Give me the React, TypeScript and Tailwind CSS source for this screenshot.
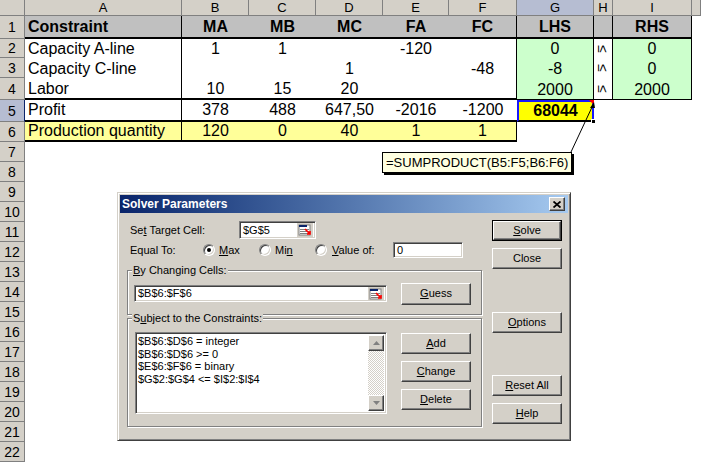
import React from "react";

const hdr = "flex items-center justify-center bg-[#d4d0c8] border-r border-b border-[#808080] text-[13px] leading-none";
const hdrSel = "flex items-center justify-center bg-[#b6bdd2] border-r border-b border-[#808080] text-[13px] leading-none";
const rowHdr = "flex items-center justify-center bg-[#d4d0c8] border-r border-b border-[#808080] text-[14px] leading-none";
const rowHdrSel = "flex items-center justify-center bg-[#b6bdd2] border-r border-b border-r-[#0a246a] border-[#808080] text-[14px] leading-none";

const r1A = "flex items-end pl-[3px] pb-[1px] bg-[#c0c0c0] border-r border-b-2 border-black font-bold text-[16px] leading-[18px]";
const r1 = "flex items-end justify-center pb-[1px] bg-[#c0c0c0] border-b-2 border-black font-bold text-[16px] leading-[18px]";
const r1R = "flex items-end justify-center pb-[1px] bg-[#c0c0c0] border-r border-b-2 border-black font-bold text-[16px] leading-[18px]";

const cA = "flex items-end pl-[3px] border-r border-black text-[16px] leading-[18px]";
const c = "flex items-end justify-center text-[16px] leading-[18px]";
const cR = "flex items-end justify-center border-r border-black text-[16px] leading-[18px]";
const cG = "flex items-end justify-center bg-[#ccffcc] border-r border-black text-[16px] leading-[18px]";
const cH = "flex items-center justify-center border-r border-black text-[14px] leading-none";

const c4A = "flex items-end pl-[3px] border-r border-b-2 border-black text-[16px] leading-[18px]";
const c4 = "flex items-end justify-center border-b-2 border-black text-[16px] leading-[18px]";
const c4R = "flex items-end justify-center border-r border-b-2 border-black text-[16px] leading-[18px]";
const c4G = "flex items-end justify-center bg-[#ccffcc] border-r border-b border-black text-[16px] leading-[18px]";
const c4H = "flex items-center justify-center border-r border-b border-black text-[14px] leading-none";

const c5A = "flex items-end pl-[3px] pb-[1px] border-r border-b-2 border-black text-[16px] leading-[18px]";
const c5 = "flex items-end justify-center pb-[1px] border-b-2 border-black text-[16px] leading-[18px]";

const c6A = "flex items-end pl-[3px] bg-[#ffff99] border-r border-b-2 border-black text-[16px] leading-[18px]";
const c6 = "flex items-end justify-center bg-[#ffff99] border-b-2 border-black text-[16px] leading-[18px]";
const c6R = "flex items-end justify-center bg-[#ffff99] border-r border-b-2 border-black text-[16px] leading-[18px]";

function Le() {
  return <span className="inline-block rotate-90">≤</span>;
}

function Sheet() {
  const rest = [7, 8, 9, 10, 11, 12, 13, 14, 15, 16, 17, 18, 19, 20, 21, 22];
  return (
    <div className="grid grid-cols-[25px_157px_67px_67px_67px_66px_68px_77px_19px_79px_1fr] grid-rows-[16px_23px_19px_20px_22px_22px_20px_repeat(16,20px)] w-[701px] h-[462px] bg-white text-black">
      <div className={hdr}></div>
      <div className={hdr}>A</div>
      <div className={hdr}>B</div>
      <div className={hdr}>C</div>
      <div className={hdr}>D</div>
      <div className={hdr}>E</div>
      <div className={hdr}>F</div>
      <div className={hdrSel}>G</div>
      <div className={hdr}>H</div>
      <div className={hdr}>I</div>
      <div className={hdr}></div>

      <div className={rowHdr}>1</div>
      <div className={r1A}>Constraint</div>
      <div className={r1}>MA</div>
      <div className={r1}>MB</div>
      <div className={r1}>MC</div>
      <div className={r1}>FA</div>
      <div className={r1R}>FC</div>
      <div className={r1R}>LHS</div>
      <div className={r1R}></div>
      <div className={r1R}>RHS</div>
      <div></div>

      <div className={rowHdr}>2</div>
      <div className={cA}>Capacity A-line</div>
      <div className={c}>1</div>
      <div className={c}>1</div>
      <div className={c}></div>
      <div className={c}>-120</div>
      <div className={cR}></div>
      <div className={cG}>0</div>
      <div className={cH}><Le /></div>
      <div className={cG}>0</div>
      <div></div>

      <div className={rowHdr}>3</div>
      <div className={cA}>Capacity C-line</div>
      <div className={c}></div>
      <div className={c}></div>
      <div className={c}>1</div>
      <div className={c}></div>
      <div className={cR}>-48</div>
      <div className={cG}>-8</div>
      <div className={cH}><Le /></div>
      <div className={cG}>0</div>
      <div></div>

      <div className={rowHdr}>4</div>
      <div className={c4A}>Labor</div>
      <div className={c4}>10</div>
      <div className={c4}>15</div>
      <div className={c4}>20</div>
      <div className={c4}></div>
      <div className={c4R}></div>
      <div className={c4G}>2000</div>
      <div className={c4H}><Le /></div>
      <div className={c4G}>2000</div>
      <div></div>

      <div className={rowHdrSel}>5</div>
      <div className={c5A}>Profit</div>
      <div className={c5}>378</div>
      <div className={c5}>488</div>
      <div className={c5}>647,50</div>
      <div className={c5}>-2016</div>
      <div className={c5}>-1200</div>
      <div className="relative flex items-center justify-center bg-[#ffff00] border-2 border-[#1818ff] border-b-black font-bold text-[16px] leading-[18px]">
        68044
        <div className="absolute right-[-2px] top-[-2px] w-0 h-0 border-l-[5px] border-l-transparent border-t-[5px] border-t-[#ff0000]"></div>
        <div className="absolute right-[-4px] bottom-[-4px] w-[5px] h-[5px] bg-black border border-white"></div>
      </div>
      <div></div>
      <div></div>
      <div></div>

      <div className={rowHdr}>6</div>
      <div className={c6A}>Production quantity</div>
      <div className={c6}>120</div>
      <div className={c6}>0</div>
      <div className={c6}>40</div>
      <div className={c6}>1</div>
      <div className={c6R}>1</div>
      <div></div>
      <div></div>
      <div></div>
      <div></div>

      {rest.map((n) => (
        <React.Fragment key={n}>
          <div className={rowHdr}>{n}</div>
          <div className="col-span-10"></div>
        </React.Fragment>
      ))}
    </div>
  );
}

const btn = "flex items-center justify-center bg-[#d4d0c8] border border-t-white border-l-white border-r-[#404040] border-b-[#404040] shadow-[inset_-1px_-1px_0_#808080] text-[11px] leading-[13px]";
const field = "flex items-center bg-white border border-t-[#808080] border-l-[#808080] border-r-white border-b-white shadow-[inset_1px_1px_0_#404040,inset_-1px_-1px_0_#d4d0c8]";

function RangeIcon() {
  return (
    <svg width="16" height="14" viewBox="0 0 16 14" className="shrink-0">
      <rect x="0" y="0" width="16" height="14" fill="#d4d0c8" />
      <rect x="2" y="2" width="11" height="10" fill="#ffffff" stroke="#808080" strokeWidth="1" />
      <rect x="2" y="2" width="8" height="2" fill="#0a246a" />
      <line x1="3" y1="6.5" x2="12" y2="6.5" stroke="#808080" />
      <line x1="3" y1="8.5" x2="12" y2="8.5" stroke="#808080" />
      <line x1="3" y1="10.5" x2="12" y2="10.5" stroke="#808080" />
      <path d="M8 6 L13 11 M13 8 L13 11 L10 11" stroke="#ff0000" strokeWidth="1.6" fill="none" />
    </svg>
  );
}

function Radio({ on }: { on?: boolean }) {
  return (
    <div className="relative w-[12px] h-[12px] rounded-full bg-white border border-t-[#808080] border-l-[#808080] border-r-white border-b-white shadow-[inset_1px_1px_0_#404040,inset_-1px_-1px_0_#d4d0c8] shrink-0">
      {on && <div className="absolute left-[3px] top-[3px] w-[4px] h-[4px] rounded-full bg-black"></div>}
    </div>
  );
}

function Dialog() {
  return (
    <div className="absolute left-[117px] top-[192px] w-[454px] h-[249px] bg-[#d4d0c8] border border-t-[#d4d0c8] border-l-[#d4d0c8] border-r-[#404040] border-b-[#404040] shadow-[inset_1px_1px_0_#ffffff,inset_-1px_-1px_0_#808080] p-[2px] flex flex-col text-[11px] leading-[13px] text-black">
      <div className="h-[18px] flex items-center justify-between bg-linear-to-r from-[#0a246a] to-[#a6caf0] pl-[2px] pr-[3px]">
        <span className="text-white font-bold text-[12px] leading-[14px]">Solver Parameters</span>
        <div className={btn + " w-[16px] h-[14px]"}>
          <svg width="8" height="7" viewBox="0 0 8 7">
            <path d="M0.5 0.5 L7.5 6.5 M7.5 0.5 L0.5 6.5" stroke="#000" strokeWidth="1.8" />
          </svg>
        </div>
      </div>
      <div className="flex pl-[7px]">
        <div className="w-[356px] flex flex-col">
          <div className="mt-[8px] h-[18px] flex items-center">
            <span className="w-[112px] pl-[3px]">Se<span className="underline">t</span> Target Cell:</span>
            <div className={field + " w-[77px] h-[18px] pl-[3px] justify-between pr-[2px]"}>
              <span>$G$5</span>
              <RangeIcon />
            </div>
          </div>
          <div className="mt-[3px] h-[16px] flex items-center">
            <span className="w-[76px] pl-[3px]">Equal To:</span>
            <div className="w-[56px] flex items-center">
              <Radio on />
              <span className="ml-[4px]"><span className="underline">M</span>ax</span>
            </div>
            <div className="w-[56px] flex items-center">
              <Radio />
              <span className="ml-[4px]">Mi<span className="underline">n</span></span>
            </div>
            <div className="w-[78px] flex items-center">
              <Radio />
              <span className="ml-[5px]"><span className="underline">V</span>alue of:</span>
            </div>
            <div className={field + " w-[70px] h-[16px] pl-[3px]"}>0</div>
          </div>
          <div className="relative mt-[12px] w-[355px] h-[45px] border border-[#808080] shadow-[inset_1px_1px_0_#ffffff,1px_1px_0_#ffffff] flex items-center pl-[6px] pt-[2px]">
            <span className="absolute left-[4px] top-[-7px] bg-[#d4d0c8] px-[1px]"><span className="underline">B</span>y Changing Cells:</span>
            <div className={field + " w-[253px] h-[17px] pl-[3px] justify-between pr-[2px]"}>
              <span>$B$6:$F$6</span>
              <RangeIcon />
            </div>
            <div className={btn + " ml-[14px] w-[70px] h-[22px]"}><span><span className="underline">G</span>uess</span></div>
          </div>
          <div className="relative mt-[3px] w-[355px] h-[109px] border border-[#808080] shadow-[inset_1px_1px_0_#ffffff,1px_1px_0_#ffffff] flex pl-[7px] pt-[13px]">
            <span className="absolute left-[4px] top-[-7px] bg-[#d4d0c8] px-[1px]">S<span className="underline">u</span>bject to the Constraints:</span>
            <div className={field + " w-[252px] h-[82px] items-stretch"}>
              <div className="flex-1 pl-[2px] pt-[2px] leading-[12.6px]">
                <div>$B$6:$D$6 = integer</div>
                <div>$B$6:$D$6 &gt;= 0</div>
                <div>$E$6:$F$6 = binary</div>
                <div>$G$2:$G$4 &lt;= $I$2:$I$4</div>
              </div>
              <div className="w-[16px] my-[2px] mr-[2px] flex flex-col bg-[repeating-conic-gradient(#d4d0c8_0_25%,#ffffff_0_50%)] bg-[length:2px_2px]">
                <div className={btn + " w-[16px] h-[16px]"}>
                  <svg width="7" height="4" viewBox="0 0 7 4"><path d="M3.5 0 L7 4 L0 4 Z" fill="#808080" /></svg>
                </div>
                <div className="flex-1"></div>
                <div className={btn + " w-[16px] h-[16px]"}>
                  <svg width="7" height="4" viewBox="0 0 7 4"><path d="M0 0 L7 0 L3.5 4 Z" fill="#808080" /></svg>
                </div>
              </div>
            </div>
            <div className="ml-[14px] flex flex-col pt-[1px]">
              <div className={btn + " w-[70px] h-[21px]"}><span><span className="underline">A</span>dd</span></div>
              <div className={btn + " mt-[7px] w-[70px] h-[21px]"}><span><span className="underline">C</span>hange</span></div>
              <div className={btn + " mt-[7px] w-[70px] h-[21px]"}><span><span className="underline">D</span>elete</span></div>
            </div>
          </div>
        </div>
        <div className="ml-[9px] w-[70px] flex flex-col">
          <div className="mt-[7px] h-[21px] border border-black flex">
            <div className={btn + " flex-1"}><span><span className="underline">S</span>olve</span></div>
          </div>
          <div className={btn + " mt-[7px] h-[21px]"}>Close</div>
          <div className={btn + " mt-[43px] h-[21px]"}><span><span className="underline">O</span>ptions</span></div>
          <div className={btn + " mt-[42px] h-[21px]"}><span><span className="underline">R</span>eset All</span></div>
          <div className={btn + " mt-[7px] h-[21px]"}><span><span className="underline">H</span>elp</span></div>
        </div>
      </div>
    </div>
  );
}

export default function App() {
  return (
    <div className="relative w-[701px] h-[462px] overflow-hidden bg-white font-['Liberation_Sans',Arial,sans-serif] text-black">
      <Sheet />
      <div className="absolute left-[382px] top-[152px] w-[190px] h-[21px] bg-[#ffffe1] border border-black shadow-[2px_2px_0_#000000] flex items-center pl-[3px] text-[13px] leading-none">
        =SUMPRODUCT(B5:F5;B6:F6)
      </div>
      <svg className="absolute left-0 top-0 pointer-events-none" width="701" height="462">
        <line x1="571" y1="152" x2="593" y2="105" stroke="#000" strokeWidth="1" />
        <path d="M594 102 L590 108 L595 108 Z" fill="#000" />
      </svg>
      <Dialog />
    </div>
  );
}
